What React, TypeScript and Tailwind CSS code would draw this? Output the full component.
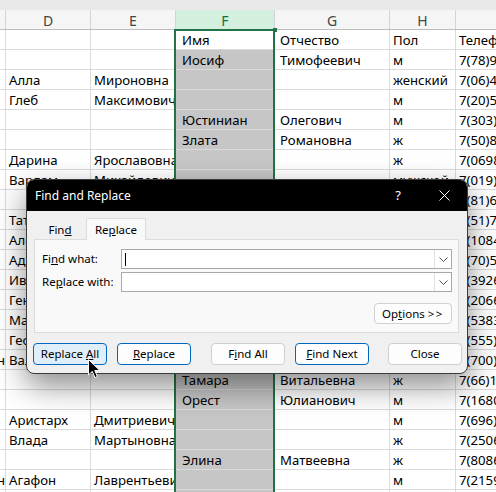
import React from 'react'

type Row = [string, string, string, string, string, string, string]

// C, D, E, F, G, H, I
const rows: Row[] = [
  ['', '', '', 'Имя', 'Отчество', 'Пол', 'Телефон'],
  ['', '', '', 'Иосиф', 'Тимофеевич', 'м', '7(78)951-42-17'],
  ['', 'Алла', 'Мироновна', '', '', 'женский', '7(06)412-58-93'],
  ['', 'Глеб', 'Максимович', '', '', 'м', '7(20)573-11-86'],
  ['', '', '', 'Юстиниан', 'Олегович', 'м', '7(303)824-65-10'],
  ['', '', '', 'Злата', 'Романовна', 'ж', '7(50)837-22-04'],
  ['', 'Дарина', 'Ярославовна', '', '', 'ж', '7(0698)35-71-2'],
  ['', 'Варлам', 'Михайлович', '', '', 'мужской', '7(019)462-88-3'],
  ['', '', '', '', '', '', '7(81)629-14-53'],
  ['', 'Татьяна', 'Андреевна', '', '', 'ж', '7(51)784-30-62'],
  ['', 'Алексей', 'Игоревич', '', '', 'м', '7(1084)52-17-9'],
  ['', 'Адриан', 'Павлович', '', '', 'м', '7(70)563-48-21'],
  ['', 'Иван', 'Сергеевич', '', '', 'м', '7(3926)14-85-3'],
  ['', 'Геннадий', 'Петрович', '', '', 'м', '7(2066)73-40-1'],
  ['', 'Марина', 'Олеговна', '', '', 'ж', '7(5383)91-26-7'],
  ['', 'Георгий', 'Ильич', '', '', 'м', '7(555)318-47-60'],
  ['Иван', 'Валентин', 'Егорович', '', '', 'м', '7(700)246-19-85'],
  ['', '', '', 'Тамара', 'Витальевна', 'ж', '7(66)182-53-49'],
  ['', '', '', 'Орест', 'Юлианович', 'м', '7(1680)47-25-3'],
  ['', 'Аристарх', 'Дмитриевич', '', '', 'м', '7(696)530-71-28'],
  ['', 'Влада', 'Мартыновна', '', '', 'ж', '7(2506)38-64-9'],
  ['', '', '', 'Элина', 'Матвеевна', 'ж', '7(8086)12-93-5'],
  ['Семён', 'Агафон', 'Лаврентьевич', '', '', 'м', '7(2159)64-08-2'],
  ['', '', '', '', '', '', ''],
]

const colW = ['w-[6px]', 'w-[85px]', 'w-[85px]', 'w-[99px]', 'w-[115px]', 'w-[66px]', 'w-[160px]']
const letters = ['C', 'D', 'E', 'F', 'G', 'H', 'I']

const Btn = ({ children, className = '' }: { children: React.ReactNode; className?: string }) => (
  <div
    className={`h-[22px] w-[74px] shrink-0 rounded-[4px] border flex items-center justify-center text-[11.5px] text-black ${className}`}
  >
    <span className="whitespace-pre">{children}</span>
  </div>
)

const Combo = ({ caret }: { caret?: boolean }) => (
  <div className="h-[20px] w-[332px] bg-white border border-[#a8a8a8] flex items-center">
    <div className="flex-1 h-full flex items-center pl-[3px]">
      {caret && <div className="w-px h-[13px] bg-black" />}
    </div>
    <div className="w-[17px] h-full border-l border-[#e0e0e0] flex items-center justify-center">
      <svg width="9" height="5" viewBox="0 0 9 5">
        <path d="M0.5 0.5 L4.5 4.5 L8.5 0.5" fill="none" stroke="#555" strokeWidth="1" />
      </svg>
    </div>
  </div>
)

export default function App() {
  return (
    <div
      className="relative w-[496px] h-[492px] overflow-hidden bg-white"
      style={{ fontFamily: '"Noto Sans", "DejaVu Sans", sans-serif' }}
    >
      {/* top strip */}
      <div className="h-[10px] bg-[#e9e9e9]" />

      {/* column headers */}
      <div className="flex h-[20px] bg-[#f5f5f5] border-b border-[#bdbdbd]">
        {letters.map((l, i) => (
          <div
            key={l}
            className={`${colW[i]} shrink-0 h-full border-r border-[#d4d4d4] flex items-center justify-center pt-[1px] text-[14px] ${
              l === 'F' ? 'bg-[#d3f0df] text-[#1d6b40]' : 'text-[#444]'
            }`}
          >
            {l === 'C' ? '' : l}
          </div>
        ))}
      </div>

      {/* sheet rows */}
      {rows.map((r, ri) => (
        <div key={ri} className="flex h-[20px] border-b border-[#dadada]">
          {r.map((v, ci) => (
            <div
              key={ci}
              className={`${colW[ci]} shrink-0 h-full border-r border-[#dadada] overflow-hidden whitespace-nowrap flex items-center pt-[2px] text-[13.2px] text-black leading-none ${
                ci === 0 ? 'justify-end' : 'pl-[3px]'
              } ${ci === 3 && ri > 0 ? 'bg-[#c6c6c6]' : ''} ${ci === 3 ? 'pl-[6px]' : ''} ${ci === 4 ? 'pl-[5px]' : ''}`}
            >
              {v}
            </div>
          ))}
        </div>
      ))}

      {/* selection frame on column F */}
      <div className="absolute left-[174px] top-[29px] w-[101px] h-[470px] border-2 border-[#217346]" />
      <div className="absolute left-[273px] top-[28px] w-[4px] h-[4px] bg-[#217346]" />

      {/* Find and Replace dialog */}
      <div className="absolute left-[26px] top-[179px] w-[442px] rounded-[8px] overflow-hidden border border-[#3c3c3c] bg-[#f0f0f0] shadow-[0_12px_30px_rgba(0,0,0,0.45)]">
        <div className="h-[31px] bg-black flex items-center text-white text-[12px]">
          <div className="flex-1 pl-[8px]">Find and Replace</div>
          <div className="w-[46px] text-center text-[13px]">?</div>
          <div className="w-[46px] h-full flex items-center justify-center">
            <svg width="11" height="11" viewBox="0 0 11 11">
              <path d="M0.5 0.5 L10.5 10.5 M10.5 0.5 L0.5 10.5" stroke="#fff" strokeWidth="1" />
            </svg>
          </div>
        </div>

        <div className="pt-[7px] pl-[7px] pr-[8px] pb-[8px]">
          <div className="flex h-[21px] text-[11.5px] text-black relative z-10">
            <div className="w-[52px] flex items-center justify-center pt-[3px]">
              <span>
                Fin<span className="underline">d</span>
              </span>
            </div>
            <div className="w-[60px] flex items-center justify-center bg-[#f9f9f9] border border-b-0 border-[#dcdcdc] rounded-t-[2px] -mb-px">
              <span>
                Re<span className="underline">p</span>lace
              </span>
            </div>
          </div>
          <div className="w-[425px] h-[94px] bg-[#f9f9f9] border border-[#dcdcdc] pt-[9px] pl-[7px] pr-[6px] text-[11.5px] text-black">
            <div className="flex items-center">
              <div className="w-[79px]">
                Fi<span className="underline">n</span>d what:
              </div>
              <Combo caret />
            </div>
            <div className="flex items-center mt-[3px]">
              <div className="w-[79px]">
                Re<span className="underline">p</span>lace with:
              </div>
              <Combo />
            </div>
            <div className="flex justify-end mt-[11px]">
              <div className="h-[21px] w-[78px] rounded-[4px] border border-[#d0d0d0] bg-[#fdfdfd] flex items-center justify-center">
                <span className="whitespace-pre">
                  Op<span className="underline">t</span>ions <span className="tracking-[1.5px]">&gt;&gt;</span>
                </span>
              </div>
            </div>
          </div>

          <div className="flex mt-[10px] -ml-px">
            <Btn className="border-[#0067c0] bg-[#e0eef9]">
              Replace <span className="underline">A</span>ll
            </Btn>
            <Btn className="ml-[10px] border-[#0067c0] bg-[#fdfdfd] w-[73px]">
              <span className="underline">R</span>eplace
            </Btn>
            <Btn className="ml-[20px] border-[#d0d0d0] bg-[#fdfdfd]">
              F<span className="underline">i</span>nd All
            </Btn>
            <Btn className="ml-[10px] border-[#0067c0] bg-[#fdfdfd]">
              <span className="underline">F</span>ind Next
            </Btn>
            <Btn className="ml-[19px] border-[#d0d0d0] bg-[#fdfdfd]">Close</Btn>
          </div>
        </div>
      </div>

      {/* mouse pointer */}
      <svg className="absolute left-[88px] top-[359px]" width="13" height="20" viewBox="0 0 13 20">
        <path d="M0.5 0.5 L0.5 16 L4.3 12.4 L7 18.6 L9.4 17.5 L6.8 11.5 L11.8 11.5 Z" fill="#000" stroke="#fff" strokeWidth="1" />
      </svg>
    </div>
  )
}
